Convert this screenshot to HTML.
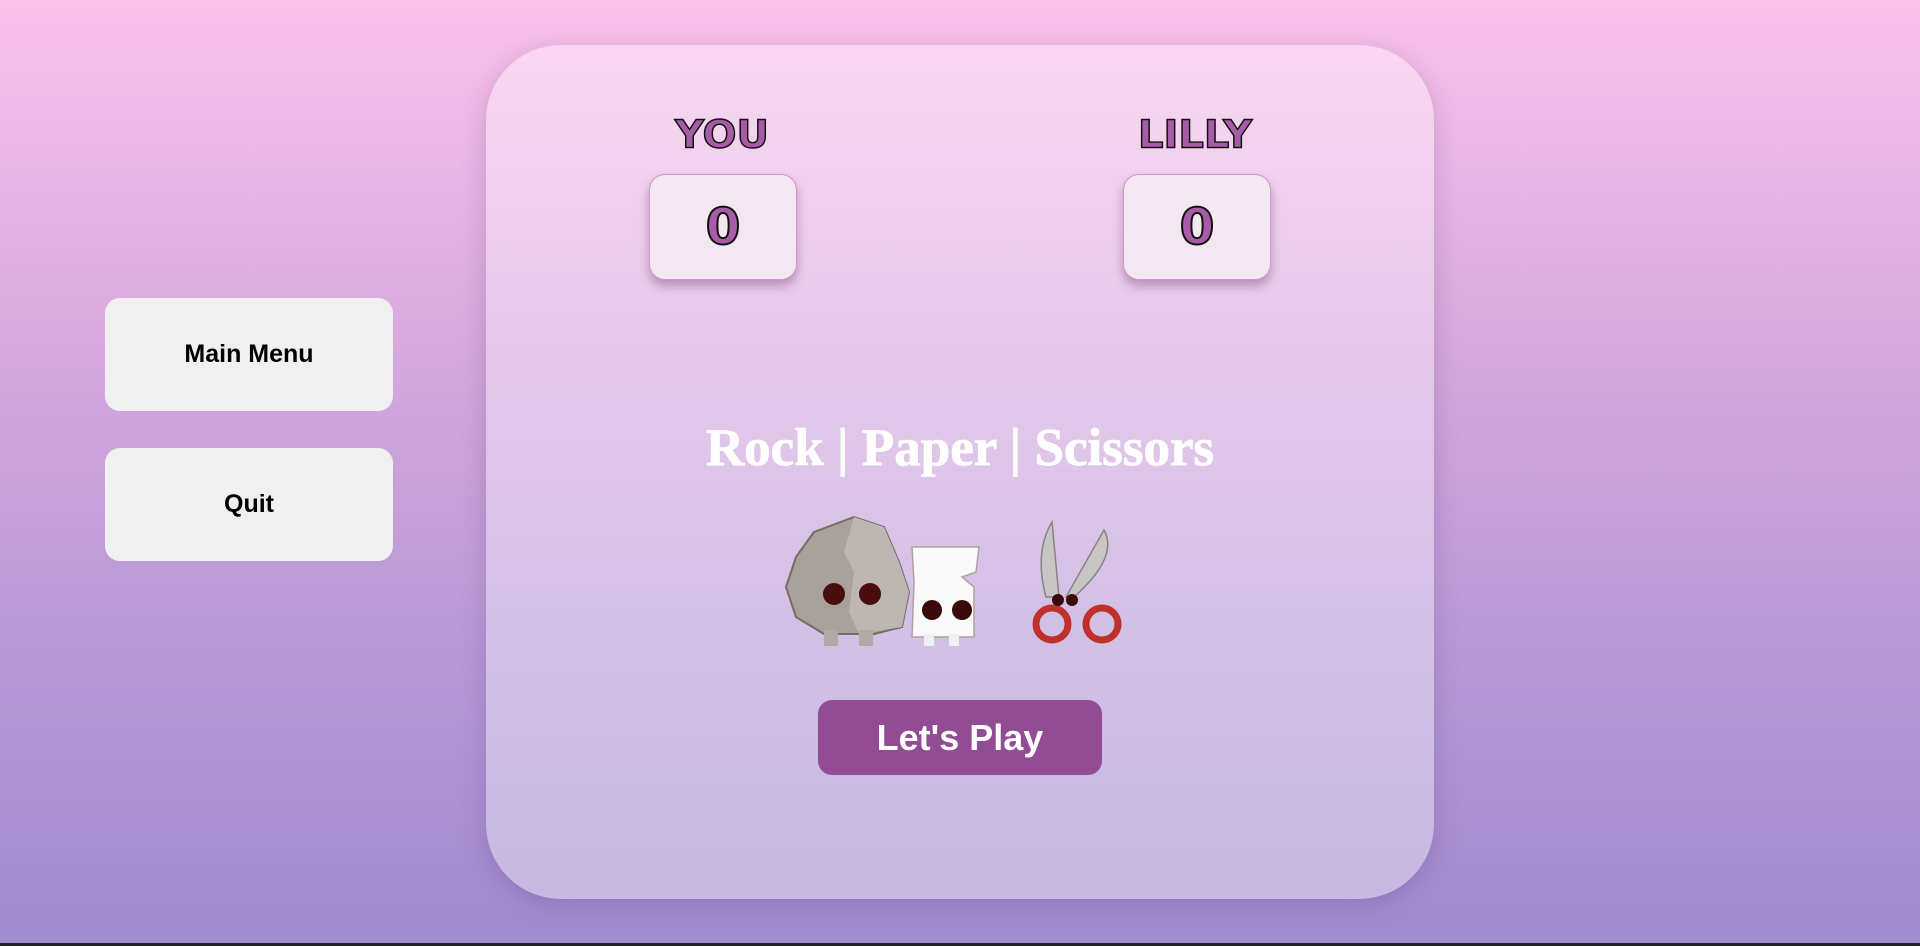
<!DOCTYPE html>
<html><head><meta charset="utf-8"><style>
*{margin:0;padding:0;box-sizing:border-box}
html,body{width:1920px;height:946px;overflow:hidden}
body{position:relative;background:linear-gradient(180deg,#fbc2ea 0%,#d9a9df 35%,#b99ad7 65%,#a08bcf 100%);font-family:"Liberation Sans",sans-serif}
.line{position:absolute;left:0;right:0;bottom:0;height:3px;background:#222}
.card{position:absolute;left:486px;top:45px;width:948px;height:854px;border-radius:75px;background:rgba(255,255,255,0.38);box-shadow:0 6px 24px rgba(90,50,120,0.25)}
.btn{position:absolute;left:105px;width:288px;height:113px;border-radius:15px;background:#f0f0f0;display:flex;align-items:center;justify-content:center;font-weight:bold;font-size:25px;color:#000;font-family:"Liberation Sans Narrow","Liberation Sans",sans-serif}
.name{position:absolute;font-weight:900;font-size:40px;color:#a85ca8;-webkit-text-stroke:1.5px #111;text-align:center;width:200px;font-family:"DejaVu Sans",sans-serif;transform:scaleY(0.95)}
.score{position:absolute;top:174px;width:148px;height:106px;border-radius:16px;background:#f3e7f1;border:1px solid #d592d9;box-shadow:0 6px 10px rgba(80,40,80,0.35);display:flex;align-items:center;justify-content:center;font-size:50px;font-weight:900;color:#a85ca8;-webkit-text-stroke:2px #111;font-family:"DejaVu Sans",sans-serif}
.title{position:absolute;left:486px;width:948px;top:418px;text-align:center;font-family:"Liberation Serif",serif;font-weight:bold;font-size:53px;color:#fff;-webkit-text-stroke:0.8px #fff}
.play{position:absolute;left:818px;top:700px;width:284px;height:75px;border-radius:14px;background:#914c94;color:#fff;font-size:36px;font-weight:bold;display:flex;align-items:center;justify-content:center}
</style></head><body>
<div class="card"></div>
<div class="btn" style="top:298px">Main Menu</div>
<div class="btn" style="top:448px">Quit</div>
<div class="name" style="left:622px;top:112px">YOU</div>
<div class="name" style="left:1095px;top:112px">LILLY</div>
<div class="score" style="left:649px">0</div>
<div class="score" style="left:1123px">0</div>
<div class="title">Rock | Paper | Scissors</div>
<svg style="position:absolute;left:784px;top:512px" width="350" height="140" viewBox="0 0 350 140">
 <path d="M30 20 L70 5 L100 15 L115 50 L125 80 L118 115 L90 122 L40 122 L12 105 L2 75 L12 45 Z" fill="#a8a19c" stroke="#7a6a62" stroke-width="2"/>
 <path d="M70 5 L100 15 L115 50 L125 80 L118 115 L75 122 L65 100 L70 60 L60 40 Z" fill="#bdb7b3"/>
 <rect x="40" y="118" width="14" height="16" fill="#b0aaa6"/><rect x="75" y="118" width="14" height="16" fill="#b0aaa6"/>
 <circle cx="50" cy="82" r="11" fill="#4a0d0d"/><circle cx="86" cy="82" r="11" fill="#4a0d0d"/>
 <path d="M128 35 L195 35 L192 60 L178 65 L190 75 L190 125 L128 125 L130 70 Z" fill="#fafafa" stroke="#b0a0a0" stroke-width="1.5"/>
 <rect x="140" y="122" width="10" height="12" fill="#f0f0f0"/><rect x="165" y="122" width="10" height="12" fill="#f0f0f0"/>
 <circle cx="148" cy="98" r="10" fill="#3a0a0a"/><circle cx="178" cy="98" r="10" fill="#3a0a0a"/>
 <path d="M268 10 Q250 40 262 85 L275 85 Z" fill="#c8c6c4" stroke="#8a8280" stroke-width="1.5"/>
 <path d="M320 18 Q335 45 290 85 L282 85 Z" fill="#c8c6c4" stroke="#8a8280" stroke-width="1.5"/>
 <circle cx="268" cy="112" r="16" fill="none" stroke="#c0302a" stroke-width="7"/>
 <circle cx="318" cy="112" r="16" fill="none" stroke="#c0302a" stroke-width="7"/>
 <circle cx="274" cy="88" r="6" fill="#3a0a0a"/><circle cx="288" cy="88" r="6" fill="#3a0a0a"/>
</svg>
<div class="play">Let's Play</div>
<div class="line"></div>
</body></html>
